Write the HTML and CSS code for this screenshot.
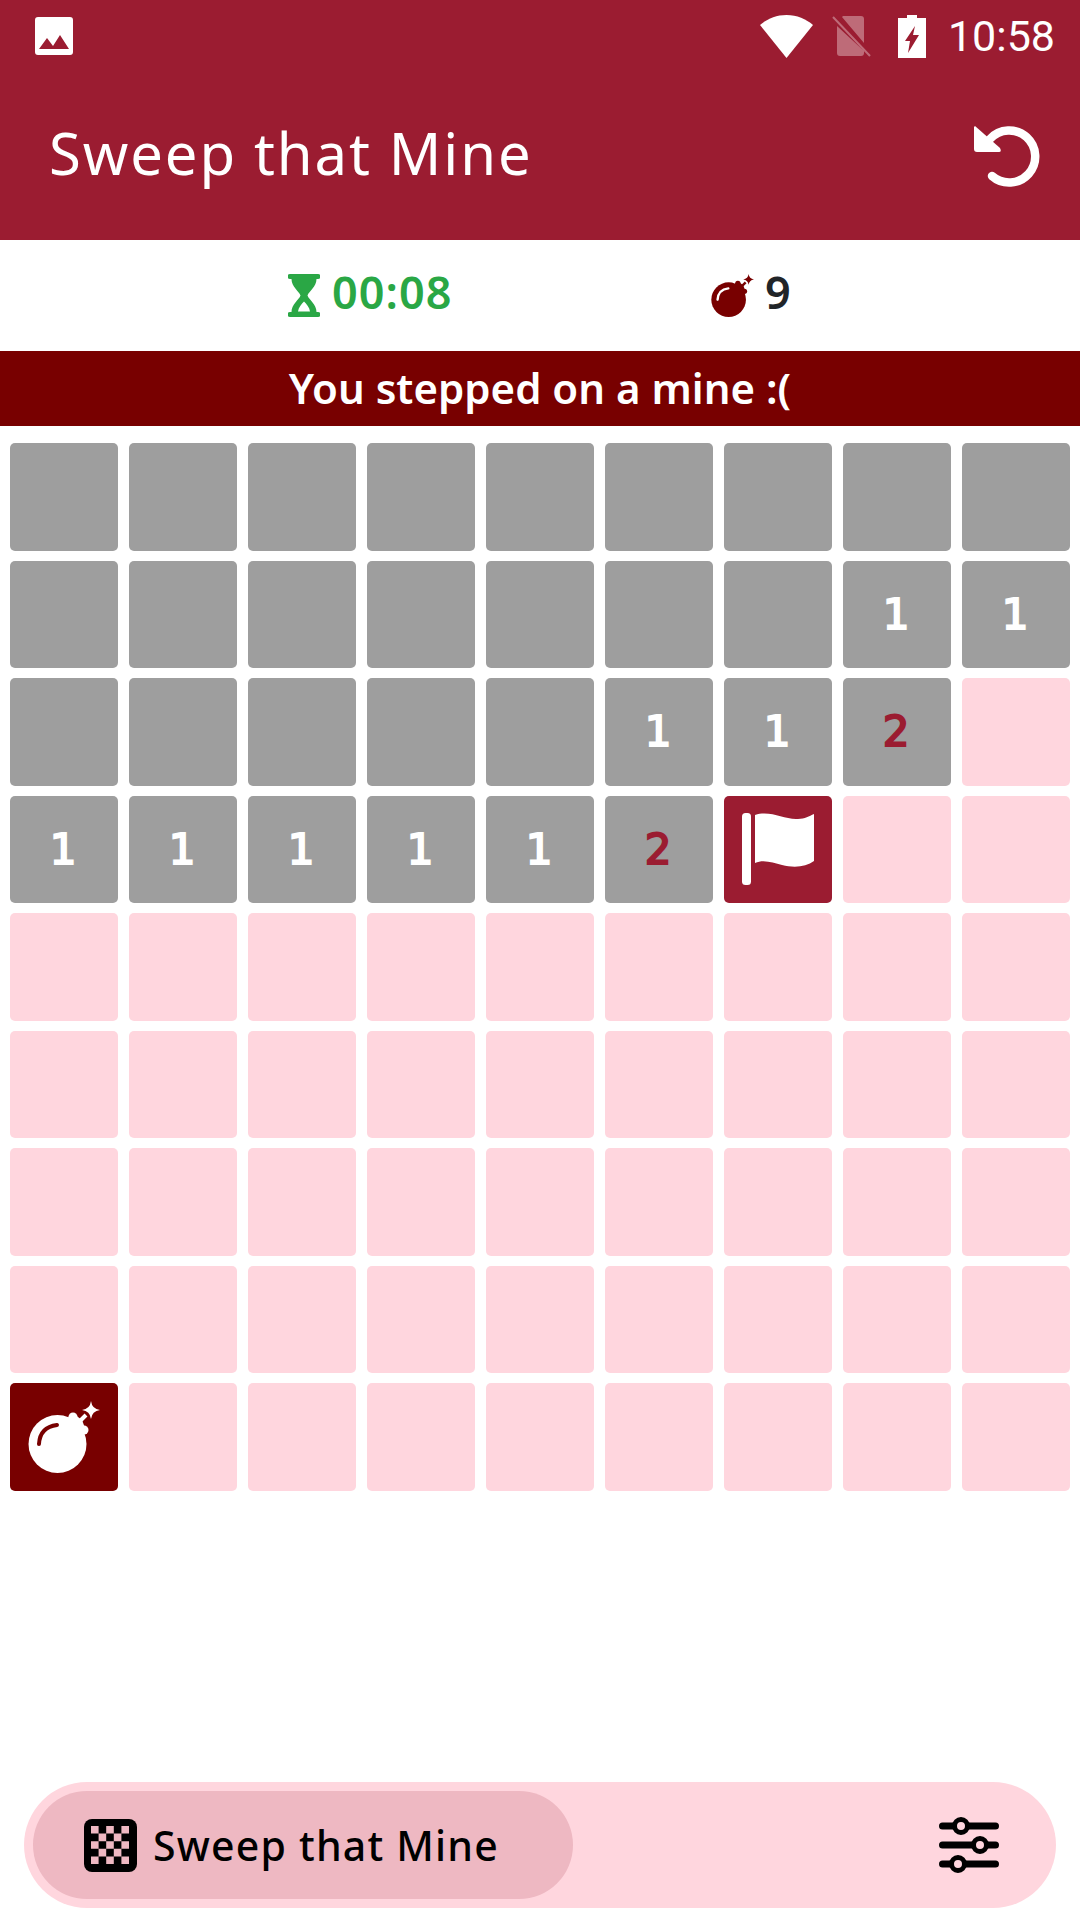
FILE: index.html
```html
<!DOCTYPE html>
<html lang="en">
<head>
    <meta charset="UTF-8">
    <meta name="viewport" content="width=device-width, initial-scale=1.0">
    <title>Sweep that Mine</title>
    <link rel="stylesheet" href="styles.css">
</head>
<body>
    <svg class="defs" width="0" height="0">
        <symbol id="bomb" viewBox="18 17 72 72">
            <circle cx="47.5" cy="60" r="29" fill="currentColor"/>
            <path d="M58 33 L64 30 L72 36 L75 44 L70 52 Z" fill="currentColor"/>
            <circle cx="63" cy="33" r="4.500" fill="currentColor"/>
            <circle cx="74" cy="46" r="4.500" fill="currentColor"/>
            <path d="M69 38 L76 31" stroke="currentColor" stroke-width="4"/>
            <path d="M81 17 Q82 25 90 26 Q82 27 81 35 Q80 27 72 26 Q80 25 81 17 Z" fill="currentColor"/>
            <path class="shine" d="M29 60 Q30 43 47 41" fill="none" stroke-width="4" stroke-linecap="round"/>
        </symbol>
        <symbol id="flag" viewBox="0 0 108 108">
            <rect x="18" y="18" width="9" height="72" rx="3.500" fill="currentColor"/>
            <path d="M31 20 C47 15 60 25 74 24 C81 24 85 21 90 19 V66 C82 72 70 73 58 70 C49 68 40 64 31 68 Z" fill="currentColor"/>
        </symbol>
    </svg>

    <header class="appbar">
        <div class="statusbar">
            <svg class="ic-image" viewBox="0 0 38 38">
                <path fill-rule="evenodd" d="M3 0H35A3 3 0 0 1 38 3V35A3 3 0 0 1 35 38H3A3 3 0 0 1 0 35V3A3 3 0 0 1 3 0ZM4 32H34L25 18 18 29 12 21Z" fill="#fff"/>
            </svg>
            <div class="status-right">
                <svg class="ic-wifi" viewBox="0 0 53 43"><path d="M0 10C7 4 16 0 26.500 0S46 4 53 10L26.500 43Z" fill="#fff"/></svg>
                <svg class="ic-sim" viewBox="0 0 39 41">
                    <path d="M5 10V37A3 3 0 0 0 8 40H29A3 3 0 0 0 32 37V35ZM11 0H29A3 3 0 0 1 32 3V27L10 1Z" fill="#fff" opacity=".35"/>
                    <path d="M1 1L38 40" stroke="#fff" stroke-width="2" opacity=".35"/>
                </svg>
                <svg class="ic-battery" viewBox="0 0 28 43">
                    <path fill-rule="evenodd" d="M9 0H19V3H28V43H0V3H9ZM17 11L7 26H12L10 38 21 20H15Z" fill="#fff"/>
                </svg>
                <span class="clock">10:58</span>
            </div>
        </div>
        <div class="toolbar">
            <h1>Sweep that Mine</h1>
            <svg class="ic-reload" viewBox="0 0 66 64">
                <path d="M16 15A26 26 0 1 1 18 52" fill="none" stroke="#fff" stroke-width="8.500" stroke-linecap="round"/>
                <path d="M1 2L26 24Q28 28 25 28H3Q0 28 0 25V3Z" fill="#fff"/>
            </svg>
        </div>
    </header>

    <div class="stats">
        <div class="stat stat-time">
            <svg class="ic-hourglass" viewBox="0 0 32 43">
                <path fill-rule="evenodd" d="M2 0H30A2 2 0 0 1 30 5H28.500C28.500 13 21 17 19.500 21.500 21 26 28.500 30 28.500 38H30A2 2 0 0 1 30 43H2A2 2 0 0 1 2 38H3.500C3.500 30 11 26 12.500 21.500 11 17 3.500 13 3.500 5H2A2 2 0 0 1 2 0ZM16 27.500C13.500 30 10.500 33.500 10 37.500H22C21.500 33.500 18.500 30 16 27.500Z" fill="currentColor"/>
            </svg>
            <span>00:08</span>
        </div>
        <div class="stat stat-mines">
            <svg class="ic-minebomb"><use href="#bomb"/></svg>
            <span>9</span>
        </div>
    </div>

    <div class="banner">You stepped on a mine :(</div>

    <main class="board" id="board"></main>

    <nav class="bottombar">
        <div class="nav-pill">
            <svg class="ic-board" viewBox="0 0 53 53">
                <rect width="53" height="53" rx="8"/>
                <path class="checks" d="M7 7h7.600v7.600h-7.600zM22.200 7h7.600v7.600h-7.600zM37.400 7h7.600v7.600h-7.600zM14.600 14.600h7.600v7.600h-7.600zM29.800 14.600h7.600v7.600h-7.600zM7 22.200h7.600v7.600h-7.600zM22.200 22.200h7.600v7.600h-7.600zM37.400 22.200h7.600v7.600h-7.600zM14.600 29.800h7.600v7.600h-7.600zM29.800 29.800h7.600v7.600h-7.600zM7 37.400h7.600v7.600h-7.600zM22.200 37.400h7.600v7.600h-7.600zM37.400 37.400h7.600v7.600h-7.600z"/>
            </svg>
            <span>Sweep that Mine</span>
        </div>
        <svg class="ic-sliders" viewBox="0 0 60 56">
            <g stroke="#000" stroke-width="7" stroke-linecap="round">
                <path d="M3.500 9H56.500M3.500 28H56.500M3.500 47H56.500"/>
            </g>
            <g fill="#ffd6de" stroke="#000" stroke-width="5">
                <circle cx="22" cy="9" r="6.500"/>
                <circle cx="41" cy="28" r="6.500"/>
                <circle cx="19" cy="47" r="6.500"/>
            </g>
        </svg>
    </nav>

    <script>
        // h = hidden grey, o = opened pink, f = flag, b = mine, digits = grey with a count
        var rows = [
            'hhhhhhhhh',
            'hhhhhhh11',
            'hhhhh112o',
            '111112foo',
            'ooooooooo',
            'ooooooooo',
            'ooooooooo',
            'ooooooooo',
            'boooooooo'
        ];
        var html = '';
        rows.forEach(function(row) {
            row.split('').forEach(function(c) {
                if (c === 'h') {
                    html += '<div class="cell hidden"></div>';
                } else if (c === 'o') {
                    html += '<div class="cell open"></div>';
                } else if (c === 'f') {
                    html += '<div class="cell flagged"><svg><use href="#flag"/></svg></div>';
                } else if (c === 'b') {
                    html += '<div class="cell mine"><svg><use href="#bomb"/></svg></div>';
                } else {
                    html += '<div class="cell hidden n' + c + '">' + c + '</div>';
                }
            });
        });
        document.getElementById('board').innerHTML = html;
    </script>
</body>
</html>
```

FILE: styles.css
```css
body {
    font-family: 'Noto Sans', 'Open Sans', sans-serif;
    margin: 0;
    padding: 0;
    width: 1080px;
    height: 1920px;
    background-color: #ffffff;
    position: relative;
    overflow: hidden;
}
.defs {
    position: absolute;
}
.appbar {
    background-color: #9b1c31;
    height: 240px;
    color: #ffffff;
}
.statusbar {
    height: 72px;
    padding: 0 25px 0 35px;
    display: flex;
    align-items: center;
    justify-content: space-between;
}
.status-right {
    display: flex;
    align-items: center;
}
.ic-image {
    width: 38px;
    height: 38px;
}
.ic-wifi {
    width: 53px;
    height: 43px;
    margin-right: 19px;
}
.ic-sim {
    width: 39px;
    height: 41px;
    margin-right: 27px;
}
.ic-battery {
    width: 28px;
    height: 43px;
    margin-right: 22px;
}
.clock {
    font-family: 'Roboto', sans-serif;
    font-size: 43px;
    line-height: 43px;
}
.toolbar {
    height: 168px;
    padding: 0 40px 8px 49px;
    box-sizing: border-box;
    display: flex;
    align-items: center;
    justify-content: space-between;
}
h1 {
    font-size: 58px;
    font-weight: 400;
    letter-spacing: 1.9px;
    margin: 0;
}
.ic-reload {
    width: 66px;
    height: 64px;
    margin-top: 8px;
}
.stats {
    height: 111px;
    display: flex;
    align-items: center;
    position: relative;
}
.stat {
    display: flex;
    align-items: center;
    font-size: 45px;
    font-weight: 600;
}
.stat span {
    margin-bottom: 8px;
}
.stat-time {
    color: #2aa745;
    margin-left: 288px;
    width: 423px;
    letter-spacing: 1px;
}
.stat-mines {
    color: #212529;
}
.ic-hourglass {
    width: 32px;
    height: 43px;
    margin-right: 12px;
}
.ic-minebomb {
    width: 43px;
    height: 43px;
    margin-right: 11px;
    color: #780000;
    --shine: #ffffff;
}
.shine {
    stroke: var(--shine);
}
.banner {
    background-color: #780000;
    color: #ffffff;
    height: 75px;
    line-height: 73px;
    text-align: center;
    font-size: 42px;
    font-weight: 600;
}
.board {
    margin-top: 17px;
    margin-left: 10px;
    width: 1060px;
    display: grid;
    grid-template-columns: repeat(9, 108px);
    grid-auto-rows: 107.5px;
    column-gap: 11px;
    row-gap: 10px;
}
.cell {
    border-radius: 5px;
    display: flex;
    align-items: center;
    justify-content: center;
    font-family: 'DejaVu Sans', sans-serif;
    font-size: 42px;
    -webkit-text-stroke: 2px currentColor;
    padding-right: 2px;
    box-sizing: border-box;
}
.cell svg {
    width: 108px;
    height: 108px;
    flex: none;
}
.flagged, .mine {
    padding-right: 0;
}
.hidden {
    background-color: #9e9e9e;
    color: #ffffff;
}
.hidden.n2 {
    color: #9b1c31;
}
.open {
    background-color: #ffd6de;
}
.flagged {
    background-color: #9b1c31;
    color: #ffffff;
}
.mine {
    background-color: #780000;
    color: #ffffff;
    --shine: #780000;
}
.mine svg {
    width: 72px;
    height: 72px;
}
.bottombar {
    position: absolute;
    left: 24px;
    top: 1782px;
    width: 1032px;
    height: 126px;
    box-sizing: border-box;
    padding: 0 57px 0 9px;
    background-color: #ffd6de;
    border-radius: 63px;
    display: flex;
    align-items: center;
    justify-content: space-between;
}
.nav-pill {
    background-color: #eeb8c2;
    width: 540px;
    height: 108px;
    box-sizing: border-box;
    padding-left: 51px;
    border-radius: 54px;
    display: flex;
    align-items: center;
    gap: 16px;
    font-size: 41px;
    letter-spacing: 1.2px;
    font-weight: 500;
    color: #000000;
}
.ic-board {
    width: 53px;
    height: 53px;
}
.checks {
    fill: #eeb8c2;
}
.ic-sliders {
    width: 60px;
    height: 56px;
}
```
